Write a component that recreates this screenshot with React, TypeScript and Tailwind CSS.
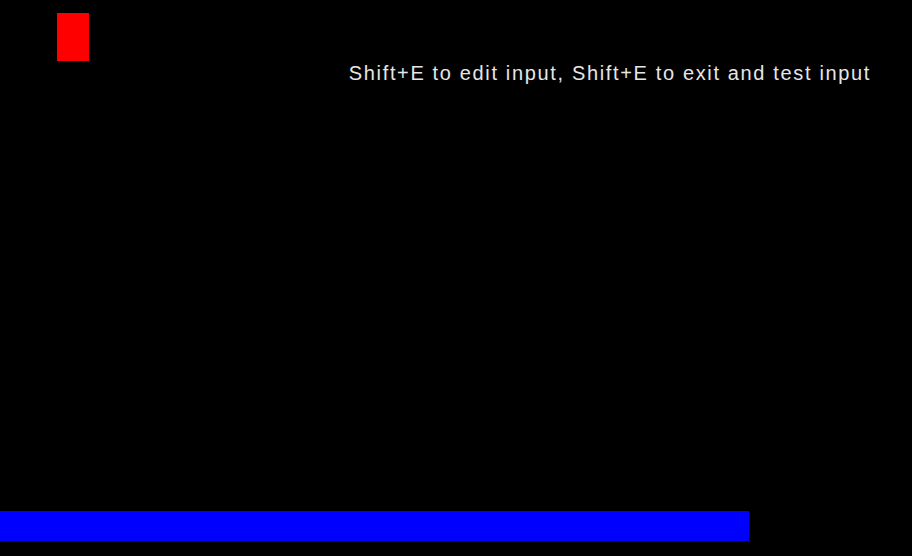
export default function App() {
  return (
    <div className="flex h-[556px] w-full flex-col bg-black">
      <div className="ml-[57px] mt-[13px] h-12 w-8 bg-[#ff0000]" />
      <p className="mr-[41px] mt-[1px] self-end font-['Liberation_Sans',Arial,sans-serif] text-[20px] leading-[22px] tracking-[1.65px] text-[#e6e6e6]">
        Shift+E to edit input, Shift+E to exit and test input
      </p>
      <div className="mb-[15px] mt-auto h-[30px] w-[749px] bg-[#0000ff]" />
    </div>
  );
}
